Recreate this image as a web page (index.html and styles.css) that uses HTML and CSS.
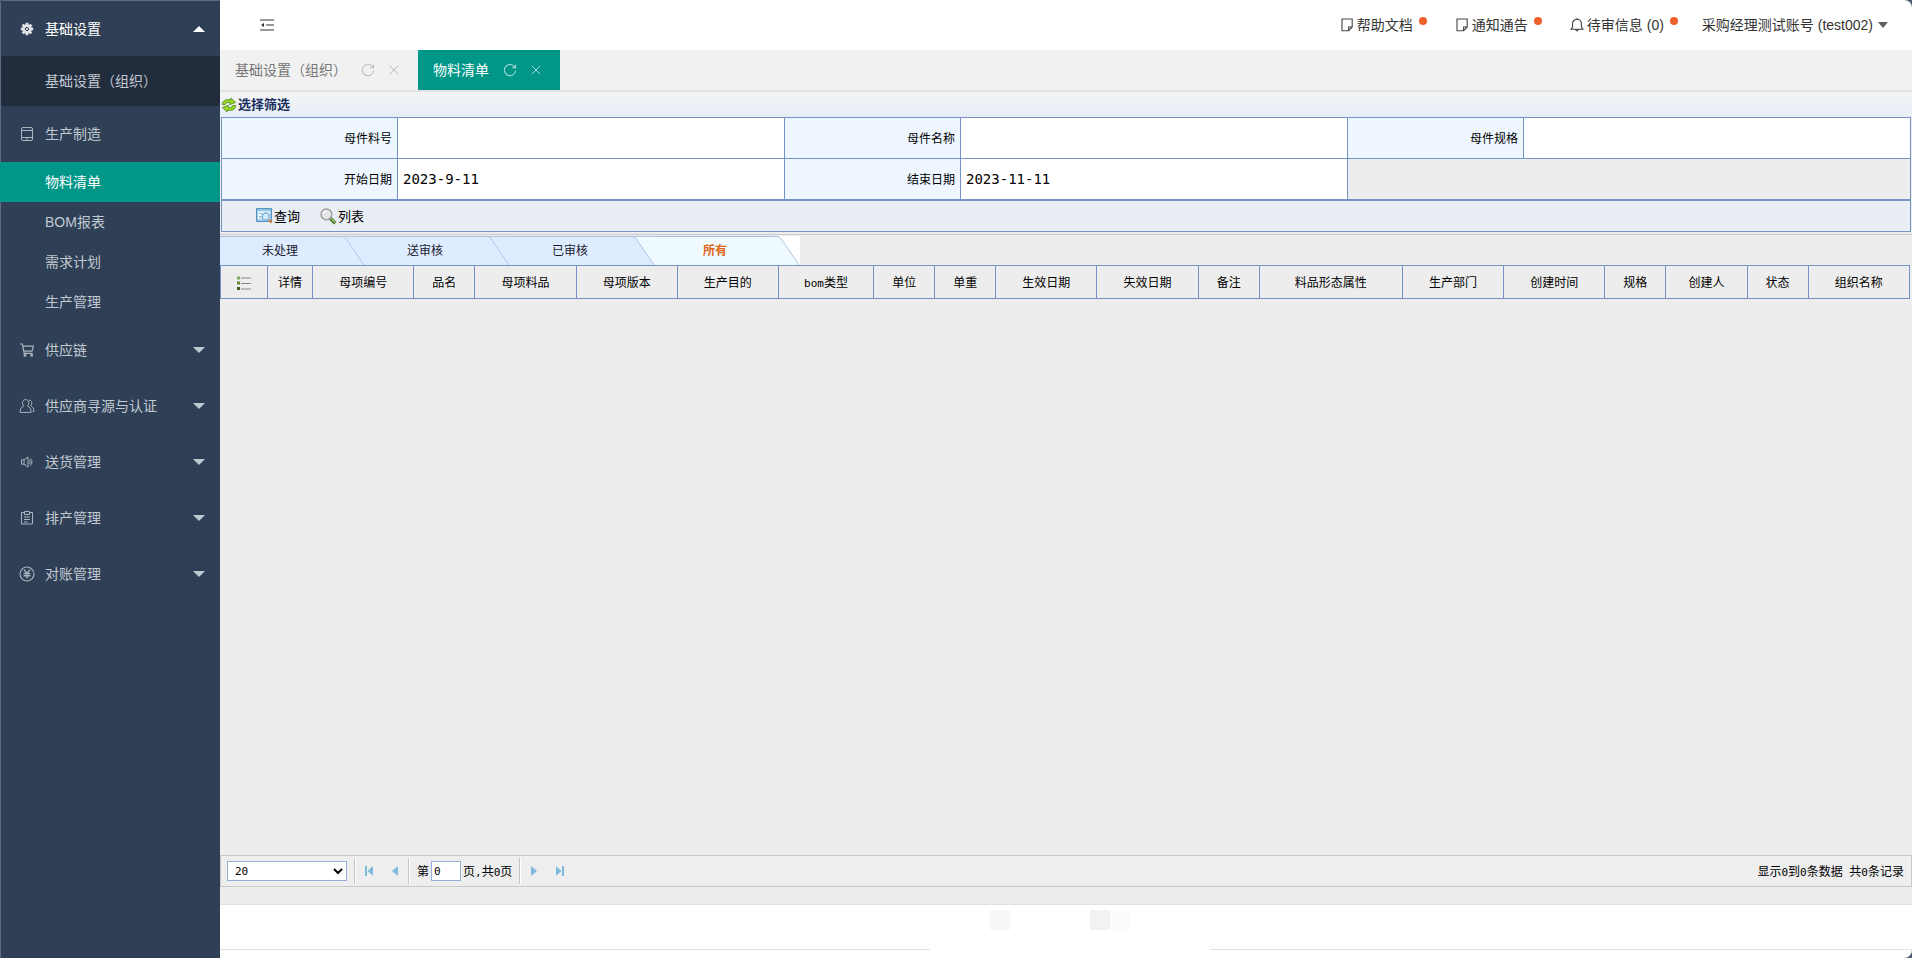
FILE: index.html
```html
<!DOCTYPE html>
<html lang="zh-CN">
<head>
<meta charset="utf-8">
<title>物料清单</title>
<link rel="stylesheet" href="styles.css">
</head>
<body>
<svg class="defs" aria-hidden="true">
  <symbol id="i-refresh" viewBox="0 0 16 16"><path d="M13.6 5A6.4 6.4 0 1 0 14.4 8.6M14.4 1.6V5.4H10.4" fill="none" stroke="currentColor" stroke-width="1.2"/></symbol>
  <symbol id="i-close" viewBox="0 0 12 12"><path d="M1 1 11 11M11 1 1 11" fill="none" stroke="currentColor" stroke-width="1.2"/></symbol>
  <symbol id="i-note" viewBox="0 0 14 14"><path d="M2 1H12.2V9L8.6 12.8H2ZM12.2 9H8.6V12.8" fill="none" stroke="currentColor" stroke-width="1.1"/></symbol>
</svg>
<div class="app">
  <nav class="side">
    <a class="item top on" href="#">
      <svg class="ico" viewBox="0 0 16 16"><g fill="currentColor"><circle cx="8" cy="8" r="4.8"/><rect x="6.6" y="1.8" width="2.8" height="12.4"/><rect x="1.8" y="6.6" width="12.4" height="2.8"/><g transform="rotate(45 8 8)"><rect x="6.6" y="1.8" width="2.8" height="12.4"/><rect x="1.8" y="6.6" width="12.4" height="2.8"/></g></g><circle cx="8" cy="8" r="1.6" fill="none" stroke="#2f4056"/></svg>
      <span>基础设置</span><i class="caret up"></i>
    </a>
    <div class="sub"><a class="item child" href="#"><span>基础设置（组织）</span></a></div>
    <a class="item top" href="#">
      <svg class="ico" viewBox="0 0 16 16"><g fill="none" stroke="currentColor"><rect x="2.5" y="1.5" width="11" height="13" rx="1.5"/><path d="M2.5 4.5H13.5M2.5 11.5H13.5M7 13H9"/></g></svg>
      <span>生产制造</span>
    </a>
    <div class="list">
      <a class="item child active" href="#"><span>物料清单</span></a>
      <a class="item child" href="#"><span>BOM报表</span></a>
      <a class="item child" href="#"><span>需求计划</span></a>
      <a class="item child" href="#"><span>生产管理</span></a>
    </div>
    <a class="item top" href="#">
      <svg class="ico" viewBox="0 0 16 16"><g fill="none" stroke="currentColor" stroke-width="1.2"><path d="M1 2H3.4L5.2 11.3H13.6M3.9 4.2H14.4L13 9.2H5"/><circle cx="6" cy="13.3" r=".9"/><circle cx="12.6" cy="13.3" r=".9"/></g></svg>
      <span>供应链</span><i class="caret"></i>
    </a>
    <a class="item top" href="#">
      <svg class="ico" viewBox="0 0 16 16"><g fill="none" stroke="currentColor"><path d="M4.8 8C2.6 6 3 1.6 6.6 1.6S10.6 6 8.4 8C11 9.2 12.2 11.4 12.2 14.4H1C1 11.4 2.2 9.2 4.8 8Z"/><path d="M10 2.2C13 2 13.6 6 11.6 7.6C13.8 8.8 15 10.6 15 13.4H13.6"/></g></svg>
      <span>供应商寻源与认证</span><i class="caret"></i>
    </a>
    <a class="item top" href="#">
      <svg class="ico" viewBox="0 0 16 16"><g fill="none" stroke="currentColor"><path d="M2.5 5.8H5L9 3V13L5 10.2H2.5ZM5 5.8V10.2M10.6 6Q12 8 10.6 10M11.2 4.4Q14.8 8 11.2 11.6"/></g></svg>
      <span>送货管理</span><i class="caret"></i>
    </a>
    <a class="item top" href="#">
      <svg class="ico" viewBox="0 0 16 16"><g fill="none" stroke="currentColor"><path d="M5 2.5H2.5V14H13.5V2.5H11M5.5 1.5H10.5V4.5H5.5ZM5 7H11M5 9.5H11M5 12H8.5"/></g></svg>
      <span>排产管理</span><i class="caret"></i>
    </a>
    <a class="item top" href="#">
      <svg class="ico" viewBox="0 0 16 16"><g fill="none" stroke="currentColor" stroke-width="1.1"><circle cx="8" cy="8" r="7"/><path d="M5 3.8 8 7.4 11 3.8M4.6 7.6H11.4M4.6 9.8H11.4M8 7.4V12.6" stroke-width="1.4"/></g></svg>
      <span>对账管理</span><i class="caret"></i>
    </a>
  </nav>

  <main class="main">
    <header class="head">
      <button class="fold" aria-label="收起菜单"><svg width="14" height="12" viewBox="0 0 14 12"><path d="M0 1H14M6 6H14M0 11H14" stroke="#333" stroke-width="1.2"/><path d="M1 6 4 4V8Z" fill="#333"/></svg></button>
      <div class="links">
        <a href="#"><svg class="hi" width="14" height="14"><use href="#i-note"/></svg><span>帮助文档</span><i class="dot"></i></a>
        <a href="#"><svg class="hi" width="14" height="14"><use href="#i-note"/></svg><span>通知通告</span><i class="dot"></i></a>
        <a href="#"><svg class="hi" width="14" height="14" viewBox="0 0 14 14"><path d="M1 11.2H13L11.4 9V5.6A4.4 4.4 0 0 0 2.6 5.6V9ZM5.6 11.4Q7 14.4 8.4 11.4M7 0V1.2" fill="none" stroke="currentColor" stroke-width="1.1"/></svg><span>待审信息 (0)</span><i class="dot"></i></a>
        <a class="user" href="#"><span>采购经理测试账号 (test002)</span><i class="caret dark"></i></a>
      </div>
    </header>

    <div class="pages">
      <div class="page"><a href="#">基础设置（组织）</a><button aria-label="刷新"><svg width="14" height="14"><use href="#i-refresh"/></svg></button><button aria-label="关闭"><svg width="10" height="10"><use href="#i-close"/></svg></button></div>
      <div class="page current"><a href="#">物料清单</a><button aria-label="刷新"><svg width="14" height="14"><use href="#i-refresh"/></svg></button><button aria-label="关闭"><svg width="10" height="10"><use href="#i-close"/></svg></button></div>
    </div>

    <section class="work">
      <h1 class="title"><svg width="16" height="16" viewBox="0 0 16 16"><g fill="#9ad62a" stroke="#4c8a10" stroke-width=".8" stroke-linejoin="round"><path d="M1.2 7.6C1.4 3.6 5.6 1.8 9.4 3L9.8 1 14.6 5.4 8.6 7.8 8.8 5.8C6.6 5 4.8 5.6 4.4 7.4Z"/><path d="M14.8 8.4C14.6 12.4 10.4 14.2 6.6 13L6.2 15 1.4 10.6 7.4 8.2 7.2 10.2C9.4 11 11.2 10.4 11.6 8.6Z"/></g></svg><span>选择筛选</span></h1>
      <form class="filter">
        <table class="fields">
          <colgroup><col class="cl"><col class="ci"><col class="cl"><col class="ci"><col class="cl"><col class="ci"></colgroup>
          <tr>
            <th><label for="f1">母件料号</label></th><td><input id="f1" type="text"></td>
            <th><label for="f2">母件名称</label></th><td><input id="f2" type="text"></td>
            <th><label for="f3">母件规格</label></th><td><input id="f3" type="text"></td>
          </tr>
          <tr>
            <th><label for="f4">开始日期</label></th><td><input id="f4" type="text" value="2023-9-11"></td>
            <th><label for="f5">结束日期</label></th><td><input id="f5" type="text" value="2023-11-11"></td>
            <td class="blank" colspan="2"></td>
          </tr>
        </table>
        <div class="tools">
          <button type="button"><svg width="17" height="16" viewBox="0 0 17 16"><rect x=".8" y=".8" width="14.4" height="12.4" fill="#eaf5fd" stroke="#2e7fb8" stroke-width="1.2"/><path d="M1.4 2.4H14.6" stroke="#8cc4ea" stroke-width="1.6"/><path d="M3 5.5H6M3 8.5H6M3 11H8" stroke="#8db7d3"/><circle cx="9.8" cy="8.4" r="3.6" fill="#cfeafd" stroke="#6ba9d4" stroke-width="1.2"/><path d="M13 11.6 15.8 14.8" stroke="#d77c35" stroke-width="2.2"/></svg><span>查询</span></button>
          <button type="button"><svg width="17" height="17" viewBox="0 0 17 17"><path d="M10 10 15.2 15.2" stroke="#47702c" stroke-width="3.4"/><path d="M10.6 10.2 15 14.4" stroke="#9bc46c" stroke-width="1.4"/><circle cx="6.4" cy="6.4" r="5.4" fill="#e2e4e5" stroke="#9b9b9b" stroke-width="1.3"/><path d="M3.4 6A3.2 3.2 0 0 1 6.6 3" fill="none" stroke="#fff" stroke-width="1.2"/></svg><span>列表</span></button>
        </div>
      </form>

      <div class="states">
        <button class="state"><span>未处理</span><svg width="25" height="29"><path class="next" d="M3 0Q5 0 6 2L25 29V0Z"/><path class="edge" d="M0 .5H2Q5 .5 7 4L24 29M3 .5H25"/></svg></button>
        <button class="state"><span>送审核</span><svg width="25" height="29"><path class="next" d="M3 0Q5 0 6 2L25 29V0Z"/><path class="edge" d="M0 .5H2Q5 .5 7 4L24 29M3 .5H25"/></svg></button>
        <button class="state"><span>已审核</span><svg width="25" height="29"><path class="lit" d="M3 0Q5 0 6 2L25 29V0Z"/><path class="edge" d="M0 .5H2Q5 .5 7 4L24 29M3 .5H25"/></svg></button>
        <button class="state sel"><span>所有</span><svg width="25" height="29"><path class="end" d="M3 0Q5 0 6 2L25 29V0Z"/><path class="edge" d="M0 .5H2Q5 .5 7 4L24 29"/></svg></button>
      </div>

      <div class="gridwrap">
        <table class="grid">
          <colgroup><col class="w47"><col class="w45"><col class="w101"><col class="w61"><col class="w101"><col class="w101"><col class="w101"><col class="w95"><col class="w61"><col class="w61"><col class="w101"><col class="w101"><col class="w61"><col class="w143"><col class="w101"><col class="w101"><col class="w61"><col class="w81"><col class="w61"><col class="w101"></colgroup>
          <thead><tr>
            <th><svg class="lst" width="14" height="14" viewBox="0 0 14 14"><path d="M4 2H14M4 7.5H14M4 13H14" stroke="#8a8a8a"/><path d="M0 2H3" stroke="#7fa860" stroke-width="3"/><path d="M0 7H3" stroke="#5f8a3c" stroke-width="3"/><path d="M0 12.5H3" stroke="#3d5a24" stroke-width="3"/></svg></th>
            <th>详情</th><th>母项编号</th><th>品名</th><th>母项料品</th><th>母项版本</th><th>生产目的</th><th><span class="num">bom</span>类型</th><th>单位</th><th>单重</th><th>生效日期</th><th>失效日期</th><th>备注</th><th>料品形态属性</th><th>生产部门</th><th>创建时间</th><th>规格</th><th>创建人</th><th>状态</th><th>组织名称</th>
          </tr></thead>
        </table>
      </div>

      <div class="pager">
        <select class="size" aria-label="每页条数"><option>20</option></select>
        <i class="sep"></i>
        <button class="pg" aria-label="首页"><svg width="10" height="12" viewBox="0 0 10 12"><path d="M1 1H3V11H1ZM9 1V11L3.6 6Z"/></svg></button>
        <button class="pg" aria-label="上一页"><svg width="10" height="12" viewBox="0 0 10 12"><path d="M8 1V11L2 6Z"/></svg></button>
        <i class="sep"></i>
        <span class="goto"><label for="pn">第</label><input id="pn" type="text" value="0"><span>页<span class="num">,</span>共<span class="num">0</span>页</span></span>
        <i class="sep"></i>
        <button class="pg" aria-label="下一页"><svg width="10" height="12" viewBox="0 0 10 12"><path d="M2 1V11L8 6Z"/></svg></button>
        <button class="pg" aria-label="末页"><svg width="10" height="12" viewBox="0 0 10 12"><path d="M7 1H9V11H7ZM1 1V11L6.4 6Z"/></svg></button>
        <span class="total">显示<span class="num">0</span>到<span class="num">0</span>条数据<span class="num"> </span>共<span class="num">0</span>条记录</span>
      </div>
    </section>

    <footer class="foot">
      <div class="blocks"><i class="b1"></i><i class="b2"></i><i class="b3"></i></div>
      <div class="rules"><i></i><i></i></div>
    </footer>
  </main>
</div>
</body>
</html>
```
FILE: styles.css
```css
* { box-sizing: border-box; }
body {
  margin: 0;
  background: #4a5b70;
  font: 14px "Liberation Sans", "Noto Sans CJK SC", sans-serif;
  color: #333;
}
a { color: inherit; text-decoration: none; }
button { border: 0; padding: 0; background: none; font: inherit; color: inherit; display: inline-flex; align-items: center; }
svg { display: block; flex: none; }
.defs { position: absolute; width: 0; height: 0; }

.app { display: flex; height: 100vh; border-radius: 4px 8px 8px 0; overflow: hidden; }

/* sidebar */
.side {
  flex: none;
  width: 220px;
  background: #2f4056;
  border-left: 1px solid #5f6d7e;
  color: #c1c9d2;
}
.side .item { display: flex; align-items: center; height: 40px; padding: 0 15px 0 44px; }
.side .item.top { height: 56px; padding-left: 18px; gap: 10px; }
.side .item.on { color: #fff; border-top: 1px solid #5f6d7e; }
.side .item span, .title span, .tools span, .links span, .page a, .goto > span, .goto label, .total { padding-bottom: 2px; }
.side .sub { background: #212d3d; padding: 5px 0; }
.side .active { background: #009688; color: #fff; margin-left: -1px; padding-left: 45px; }
.ico { width: 16px; height: 16px; opacity: .85; }
.caret { margin-left: auto; border: 6px solid transparent; border-top-color: currentColor; border-bottom: 0; }
.caret.up { border-top: 0; border-bottom: 6px solid #fff; }

/* header */
.main { flex: 1; min-width: 0; display: flex; flex-direction: column; background: #fff; }
.head { flex: none; display: flex; align-items: center; justify-content: space-between; height: 50px; padding: 0 24px 0 40px; }
.links { display: flex; gap: 28px; }
.links a { display: flex; align-items: center; }
.hi { margin-right: 3px; color: #444; }
.dot { width: 8px; height: 8px; margin: -8px 0 0 6px; border-radius: 50%; background: #ee5f2c; }
.user { gap: 5px; margin-left: -4px; }
.links .caret { border-width: 6px 5px 0; }
.caret.dark { color: #5f5f5f; }

.pages { flex: none; display: flex; height: 42px; background: #f1f1f1; border-bottom: 2px solid #e2e2e2; }
.page { display: flex; align-items: center; gap: 14px; padding: 0 19px 0 15px; color: #777; }
.page button { color: #bbb; }
.page.current { background: #009688; color: #fff; }
.page.current button { color: #a8dcd6; }

/* work area */
.work { flex: 1; min-height: 0; display: flex; flex-direction: column; background: #ededed; padding-bottom: 17px; border-bottom: 1px solid #e2e2e2; font-size: 12px; color: #000; }
.title {
  display: flex; align-items: center; gap: 1px;
  height: 25px; margin: 0; padding-left: 1px;
  background: linear-gradient(#f3f3f3, #e6edf7);
  font-size: 13px; font-weight: bold; color: #1b2f5e;
}
.filter { margin: 0 1px; }
.fields { width: 100%; table-layout: fixed; border-collapse: collapse; }
.cl { width: 176px; }
.fields th, .fields td { height: 41px; padding: 0; border: 1px solid #7394c4; }
.fields th { background: #eef7ff; text-align: right; font-weight: normal; padding: 0 5px 2px 0; }
.fields td { background: #fff; }
.fields .blank { background: #ededed; }
.fields input {
  display: block; width: 100%; height: 39px; padding: 0 5px; border: 0; background: none; outline: 0;
  font: 14px "DejaVu Sans Mono", monospace; color: #000;
}
.tools {
  display: flex; align-items: center; gap: 20px; height: 32px; padding-left: 34px;
  border: 1px solid #7394c4; background: #e9edf4; font-size: 13px;
}
.tools button { gap: 1px; }

.states { display: flex; margin-top: 2px; padding-top: 1px; border-top: 1px solid #ccc; background: #ededed; }
.state { width: 145px; height: 29px; background: #deecff; font-size: 12px; color: #1a1a2e; }
.state span { flex: 1; height: 29px; line-height: 28px; border-top: 1px solid #a9bcdc; text-align: center; }
.state.sel { background: #eefaff; color: #e0661a; font-weight: bold; }
.next { fill: #deecff; }
.lit { fill: #eefaff; }
.end { fill: #fff; }
.edge { fill: none; stroke: #b3c4e0; }

.gridwrap { flex: 1; padding-right: 2px; }
.grid { width: 100%; table-layout: fixed; border-collapse: collapse; }
.grid th { height: 33px; padding: 0 0 2px; border: 1px solid #7394c4; font-weight: normal; text-align: center; }
.lst { margin: 3px auto 0; }
.num { font: 11px "DejaVu Sans Mono", monospace; white-space: pre; }
.w45 { width: 45px; }
.w47 { width: 47px; }
.w61 { width: 61px; }
.w81 { width: 81px; }
.w95 { width: 95px; }
.w101 { width: 101px; }
.w143 { width: 143px; }

.pager {
  display: flex; align-items: center; height: 32px; padding: 0 7px 0 6px;
  border: 1px solid #c8c8c8; background: #eee;
}
.size, .goto input { height: 20px; border: 1px solid #95b0d8; background-color: #fff; color: #000; font: 11px "DejaVu Sans Mono", monospace; }
.size { width: 120px; margin-right: 7px; padding: 0 0 0 3px; border-radius: 0; }
.sep { width: 2px; height: 26px; border-left: 1px solid #c4c4c4; border-right: 1px solid #fff; }
.pg { width: 26px; height: 26px; justify-content: center; }
.pg svg { fill: #7fb9dc; }
.goto { display: flex; align-items: center; gap: 2px; margin: 0 7px; }
.goto input { width: 30px; padding: 0 2px; outline: 0; }
.total { margin-left: auto; }

/* footer */
.foot { flex: none; display: flex; flex-direction: column; justify-content: space-between; height: 53px; padding: 5px 0 8px; }
.blocks { display: flex; justify-content: center; padding-right: 12px; }
.blocks i { height: 20px; }
.b1 { width: 20px; margin-right: 80px; background: #f7f7f7; }
.b2 { width: 20px; background: #f2f2f2; }
.b3 { width: 20px; background: #fcfcfc; }
.rules { display: grid; grid-template-columns: 710fr 280fr 702fr; }
.rules i { border-top: 1px solid #e2e2e2; }
.rules i:last-child { grid-column: 3; }
```
